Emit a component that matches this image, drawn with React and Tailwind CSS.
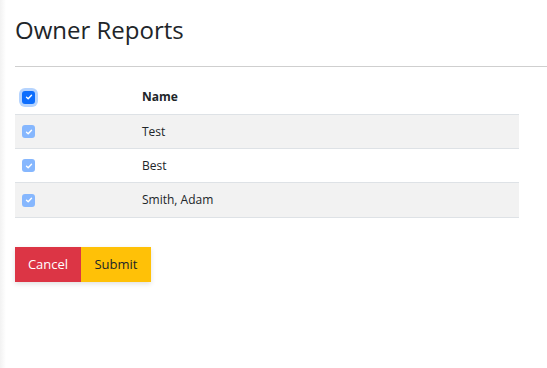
import React from "react";

function Check({ header }) {
  return (
    <span
      className={
        header
          ? "flex h-[13px] w-[13px] items-center justify-center rounded-[3px] bg-[#0d6efd] ring-[3px] ring-[#b6d4fe]"
          : "flex h-[13px] w-[13px] items-center justify-center rounded-[3px] bg-[#86b7fe]"
      }
    >
      <svg width="8" height="8" viewBox="0 0 8 8" fill="none">
        <path d="M1.5 4.2 L3.2 5.8 L6.5 2.3" stroke="white" strokeWidth="1.4" strokeLinecap="round" strokeLinejoin="round" />
      </svg>
    </span>
  );
}

export default function App() {
  const rows = ["Test", "Best", "Smith, Adam"];
  return (
    <div className="relative h-[368px] w-[547px] bg-white text-[#212529]" style={{ fontFamily: '"Open Sans", "Noto Sans", sans-serif' }}>
      <div className="absolute inset-y-0 left-0 w-[6px] bg-gradient-to-r from-[#f2f2f2] to-white" />
      <div className="pl-[15px] pt-[14px]">
        <h1 className="text-[24px] font-normal leading-[32px] text-[#212529]">Owner Reports</h1>
        <div className="mt-[20px] h-px bg-[#cfcfcf]" />
        <div className="mt-[13px] w-[504px] text-[12px]">
          <div className="flex h-[35px] items-center border-b border-[#dee2e6]">
            <div className="w-[127px] pl-[7px]"><Check header /></div>
            <div className="font-bold">Name</div>
          </div>
          {rows.map((r, i) => (
            <div key={r} className={"flex items-center border-b border-[#dee2e6] " + (i === 2 ? "h-[35px] " : "h-[34px] ") + (i % 2 === 0 ? "bg-[#f2f2f2]" : "bg-white")}>
              <div className="w-[127px] pl-[7px]"><Check /></div>
              <div>{r}</div>
            </div>
          ))}
        </div>
        <div className="mt-[29px] flex w-fit shadow-[0_2px_5px_rgba(0,0,0,0.12)]">
          <button className="h-[35px] w-[66px] bg-[#dc3545] text-[13px] text-white">Cancel</button>
          <button className="h-[35px] w-[70px] bg-[#ffc107] text-[13px] text-[#212529]">Submit</button>
        </div>
      </div>
    </div>
  );
}
